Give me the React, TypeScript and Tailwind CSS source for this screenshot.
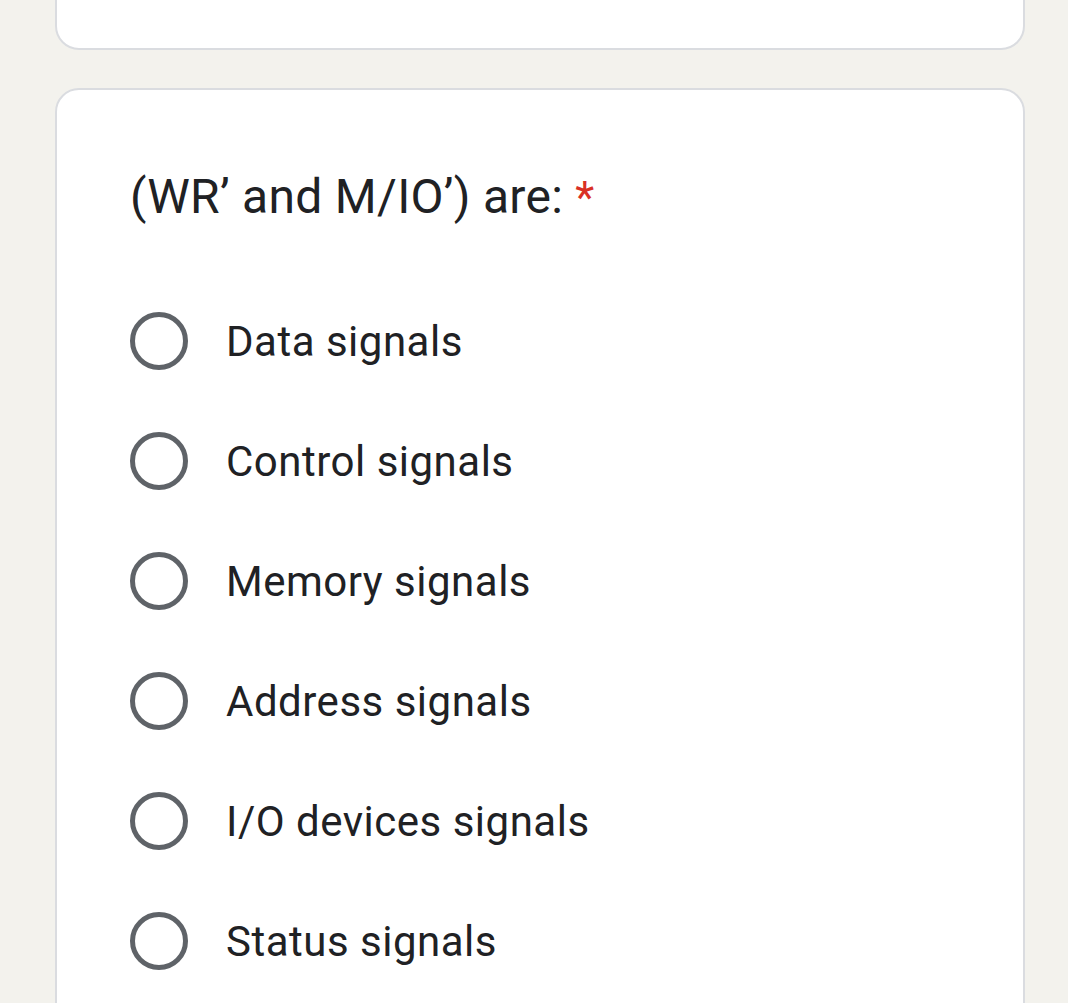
const options = [
  'Data signals',
  'Control signals',
  'Memory signals',
  'Address signals',
  'I/O devices signals',
  'Status signals',
]

function Radio() {
  return (
    <span className="box-border block h-[58px] w-[58px] shrink-0 rounded-full border-[5px] border-[#5f6368]" />
  )
}

export default function App() {
  return (
    <div className="min-h-[1003px] overflow-hidden bg-[#f3f2ed] pb-10 font-['Roboto',sans-serif]">
      <div className="ml-[55px] -mt-[150px] h-[200px] w-[970px] rounded-[24px] border-2 border-[#dadce0] bg-white" />

      <div className="ml-[55px] mt-[38px] w-[970px] rounded-[24px] border-2 border-[#dadce0] bg-white px-[73px] pt-[79px] pb-10">
        <h2 className="text-[48px] leading-[56px] tracking-[0.3px] text-[#202124]">
          (WR’ and M/IO’) are:<span className="ml-3 text-[44px] text-[#d93025]">*</span>
        </h2>

        <div className="mt-[55px] flex flex-col">
          {options.map((label) => (
            <label key={label} className="flex h-[120px] items-center gap-[38px]">
              <Radio />
              <span className="text-[42px] tracking-[0.5px] text-[#202124]">{label}</span>
            </label>
          ))}
        </div>
      </div>
    </div>
  )
}
